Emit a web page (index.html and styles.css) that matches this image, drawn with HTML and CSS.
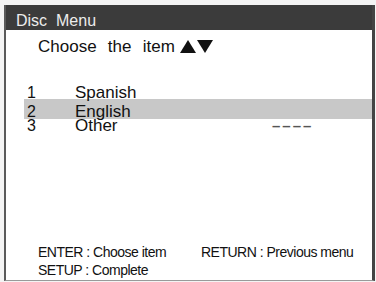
FILE: index.html
```html
<!DOCTYPE html>
<html>
<head>
<meta charset="utf-8">
<link rel="stylesheet" href="styles.css">
</head>
<body>
<div class="screen">
  <div class="title">Disc&nbsp; Menu</div>
  <div class="prompt">
    <span class="prompt-text">Choose the item</span>
    <svg class="arrows" width="34" height="13" viewBox="0 0 34 13"><polygon points="0,13 8,0 16,13" fill="#111"/><polygon points="17,0 33,0 25,13" fill="#111"/></svg>
  </div>
  <div class="list">
    <div class="row r1"><span class="num">1</span><span class="word">Spanish</span></div>
    <div class="row r2 selected"><span class="num">2</span><span class="word">English</span></div>
    <div class="row r3"><span class="num">3</span><span class="word">Other</span><span class="dashes">––––</span></div>
  </div>
  <div class="footer">
    <span>ENTER : Choose item</span><span>RETURN : Previous menu</span>
    <span>SETUP : Complete</span><span></span>
  </div>
</div>
</body>
</html>
```
FILE: styles.css
```css
html, body {
  margin: 0;
  padding: 0;
}
body {
  width: 376px;
  height: 282px;
  background: #f4f4f4;
  font-family: "Liberation Sans", Arial, sans-serif;
  color: #111;
  overflow: hidden;
}
.screen {
  box-sizing: border-box;
  margin: 5px 0 0 4px;
  width: 371px;
  height: 276px;
  background: #fff;
  border-left: 2px solid #5a5a5a;
  border-right: 3px solid #444;
  border-bottom: 1px solid #9a9a9a;
  display: flex;
  flex-direction: column;
}
.title {
  box-sizing: border-box;
  height: 25px;
  padding: 7px 0 0 10px;
  background: #3b3b3b;
  color: #ececec;
  font-size: 16px;
  line-height: 18px;
}
.prompt {
  margin-top: 7px;
  padding-left: 32px;
  display: flex;
  align-items: flex-start;
  height: 20px;
}
.prompt-text {
  font-size: 17px;
  line-height: 20px;
  word-spacing: 6.5px;
}
.arrows {
  margin: 3px 0 0 5px;
}
.list {
  margin-top: 29px;
  margin-left: 18px;
}
.row {
  display: flex;
  font-size: 17px;
}
.num {
  width: 51px;
  padding-left: 3px;
  box-sizing: border-box;
  font-size: 16px;
}
.word {
  width: 197px;
}
.r1 {
  height: 13px;
  line-height: 13px;
}
.r2 {
  height: 20px;
  line-height: 25px;
}
.r3 {
  height: 14px;
  line-height: 13px;
}
.selected {
  background: #c8c8c8;
}
.dashes {
  color: #555;
  font-size: 15px;
  font-weight: bold;
  letter-spacing: 2px;
}
.footer {
  margin-top: auto;
  padding: 0 0 1px 32px;
  display: grid;
  grid-template-columns: 163px auto;
  font-size: 14px;
  line-height: 18px;
  letter-spacing: -0.5px;
}
```
